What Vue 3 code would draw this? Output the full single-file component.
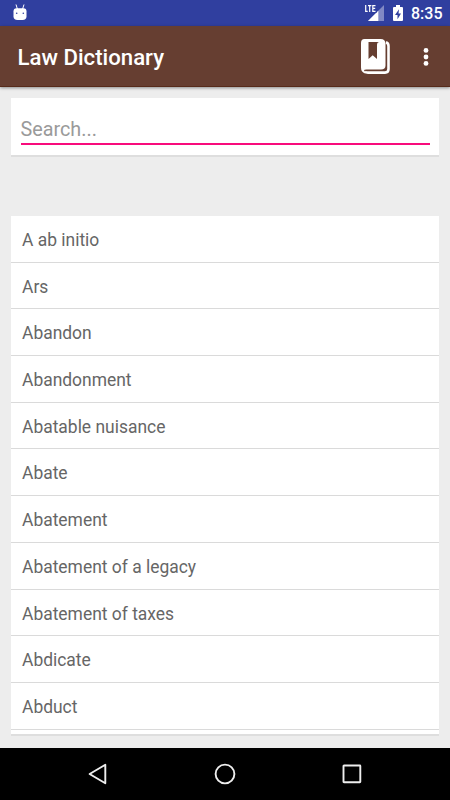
<script setup>
const terms = [
  'A ab initio', 'Ars', 'Abandon', 'Abandonment', 'Abatable nuisance', 'Abate',
  'Abatement', 'Abatement of a legacy', 'Abatement of taxes', 'Abdicate', 'Abduct',
]
</script>

<template>
  <div class="screen">
    <div class="status">
      <svg class="droid" width="14" height="17" viewBox="0 0 14 17">
        <path d="M3 .5l1.400 4.500M11 .5L9.600 5" stroke="#fff" stroke-width="1" />
        <path d="M.5 7.2Q.5 4.3 3.5 4.3h7q3 0 3 2.900v5Q13.500 16 9.500 16h-5Q.5 16 .5 12.200z" fill="#fff" />
        <circle cx="3.700" cy="9.300" r=".8" fill="#303f9f" />
        <circle cx="10.300" cy="9.300" r=".8" fill="#303f9f" />
      </svg>
      <svg class="signal" width="20" height="17" viewBox="0 0 20 17">
        <path d="M19 0V16H3z" fill="#8189c4" />
        <path d="M13.300 5.700V16H3z" fill="#fff" />
        <path d="M0 0h11.500v8H0z" fill="#303f9f" />
        <path d="M.7 0v6.400h2M3 .6h3.400M4.700.6v6.300M10.500.6H7.800v5.800h2.700M7.800 3.400h2.400" fill="none" stroke="#fff" stroke-width="1.200" />
      </svg>
      <svg class="battery" width="10" height="17" viewBox="0 0 10 17">
        <path d="M3 0h4v2h2q1 0 1 1v12q0 1-1 1H1q-1 0-1-1V3q0-1 1-1h2z" fill="#fff" />
        <path d="M6 4.300L2 10h2.500v4.200L8 8.500H5.500z" fill="#303f9f" />
      </svg>
      <span class="clock">8:35</span>
    </div>
    <header class="bar">
      <h1>Law Dictionary</h1>
      <svg class="book" width="31" height="37" viewBox="0 0 31 37">
        <path d="M5 33.800Q6 34.600 8 34.600h17Q28.500 34.600 28.500 31V8Q28.500 5 26 4.200" fill="none" stroke="#fff" stroke-width="2.600" />
        <path fill-rule="evenodd" d="M4.500 1H20.500Q25.500 1 25.500 6V27.500Q25.500 31.500 21 31.500H6.500Q4 31.500 4 32.200Q4 33.300 6.500 34L5 35.500Q1 34 1 29.500V5Q1 1 4.500 1zM8.500 4V21L12.700 17.200L17 21V7Q17 4 19.500 4z" fill="#fff" />
      </svg>
      <svg class="more" width="6" height="20" viewBox="0 0 6 20" fill="#fff">
        <circle cx="3" cy="3.400" r="2.400" />
        <circle cx="3" cy="10" r="2.400" />
        <circle cx="3" cy="16.400" r="2.400" />
      </svg>
    </header>
    <main>
      <section class="card search">
        <input type="text" placeholder="Search..." aria-label="Search">
      </section>
      <ul class="card list">
        <li v-for="term in terms" :key="term">{{ term }}</li>
      </ul>
    </main>
    <nav class="nav">
      <svg width="22" height="24" viewBox="0 0 22 24"><path d="M18.300 2.700V21.300L2.600 12z" /></svg>
      <svg width="24" height="24" viewBox="0 0 24 24"><circle cx="12" cy="12" r="9.400" /></svg>
      <svg width="22" height="24" viewBox="0 0 22 24"><rect x="2.500" y="3.500" width="16.800" height="16.800" rx=".5" /></svg>
    </nav>
  </div>
</template>

<style>
body { background: #ededed; }
</style>

<style scoped>
.screen {
  width: 450px;
  height: 800px;
  display: flex;
  flex-direction: column;
  overflow: hidden;
  background: #ededed;
  font-family: Roboto, sans-serif;
}
.status {
  flex: none;
  height: 26px;
  display: flex;
  align-items: flex-start;
  background: #303f9f;
  color: #fff;
}
.droid { margin: 4px 0 0 13px; }
.signal { margin: 5px 0 0 auto; }
.battery { margin: 5px 0 0 8px; }
.clock {
  width: 30px;
  margin: 0 9px 0 8px;
  font-size: 16px;
  font-weight: 500;
  line-height: 28px;
  white-space: nowrap;
}
.bar {
  flex: none;
  height: 61px;
  box-sizing: border-box;
  display: flex;
  align-items: center;
  padding: 0 21px 0 17.500px;
  background: #663e31;
  border-bottom: 1px solid #572b1b;
  box-shadow: 0 1px 3px rgba(0, 0, 0, .4);
  z-index: 1;
}
h1 {
  margin: 2px auto 0 0;
  color: #fff;
  font-size: 22.200px;
  font-weight: 500;
  line-height: 30px;
}
.book { margin: 1px 32px 0 0; }
.more { margin-top: 2px; }
main {
  flex: 1;
  min-height: 0;
  padding: 11px 11px 0;
}
.card {
  background: #fff;
  box-shadow: 0 2px 0 #dedede;
}
.search {
  box-sizing: border-box;
  height: 57px;
  padding: 16px 9.500px 0;
}
input {
  display: block;
  box-sizing: border-box;
  width: 100%;
  height: 31px;
  padding: 2px 0 0;
  border: 0;
  border-bottom: 2px solid #f80c7c;
  border-radius: 0;
  outline: 0;
  background: transparent;
  color: #555;
  font: 19.800px Roboto, sans-serif;
}
input::placeholder { color: #9a9a9a; opacity: 1; }
.list {
  box-sizing: border-box;
  height: 518px;
  margin: 61px 0 0;
  padding: 0;
  list-style: none;
  overflow: hidden;
}
li {
  box-sizing: border-box;
  height: 46.700px;
  padding-left: 11px;
  border-bottom: 1px solid #dadada;
  color: #666;
  font-size: 17.450px;
  line-height: 48px;
}
.nav {
  flex: none;
  height: 52px;
  display: flex;
  align-items: center;
  justify-content: center;
  gap: 104px;
  background: #000;
}
.nav svg { fill: none; stroke: #eee; stroke-width: 1.900; stroke-linejoin: round; }
</style>
